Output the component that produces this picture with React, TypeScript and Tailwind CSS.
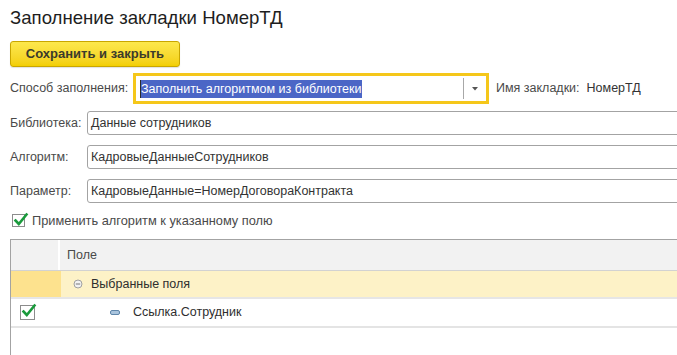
import React from 'react';

// Small form in the 1C style: fill settings for a bookmark
function CheckBox({ className = '' }: { className?: string }) {
  return (
    <span className={`relative inline-block w-[13px] h-[13px] border border-[#8c8c8c] bg-white ${className}`}>
      <svg className="absolute left-[0px] top-[-3px]" width="16" height="16" viewBox="0 0 16 16">
        <path d="M2.5 8.5 L5.8 12 L13.5 2.5" fill="none" stroke="#1a9a3c" strokeWidth="2.6" strokeLinecap="square" />
      </svg>
    </span>
  );
}

function Field({ label, value }: { label: string; value: string }) {
  return (
    <div className="flex items-center h-[24px]">
      <span className="w-[77px] shrink-0 text-[#4a4a4a]">{label}</span>
      <div className="flex-1 -mr-[6px] h-[24px] border border-[#a3a3a3] rounded-l-[3px] flex items-center pl-[3px] text-[#333]">
        {value}
      </div>
    </div>
  );
}

export default function App() {
  return (
    <div className="w-[677px] h-[355px] overflow-hidden bg-white font-['Liberation_Sans',Arial,sans-serif] text-[12.5px] text-[#333]">
      <div className="pl-[10px]">
        <h1 className="pt-[6px] h-[30px] text-[18.6px] leading-[24px] text-[#1e1e1e]">Заполнение закладки НомерТД</h1>

        <button className="mt-[11px] h-[26px] w-[170px] rounded-[3px] border border-[#c9a600] bg-gradient-to-b from-[#fde84c] to-[#f3cf00] font-bold text-[13px] text-[#3b3b2b] shadow-[0_1px_1px_rgba(0,0,0,0.12)]">
          Сохранить и закрыть
        </button>

        <div className="mt-[6px] flex items-center h-[31px]">
          <span className="w-[123px] shrink-0 text-[#4a4a4a]">Способ заполнения:</span>
          <div className="w-[356px] h-[31px] border-[3px] border-[#f5c71a] flex items-center pl-[4px]">
            <span className="h-[18px] leading-[18px] bg-[#4b66c6] text-white pr-[1px] border-l border-[#2b2b2b]">
              Заполнить алгоритмом из библиотеки
            </span>
            <div className="ml-auto h-[21px] w-px bg-[#a8a8a8]" />
            <div className="w-[22px] flex justify-center">
              <svg width="6" height="4" viewBox="0 0 6 4">
                <path d="M0 0 H6 L3 3.5 Z" fill="#555" />
              </svg>
            </div>
          </div>
          <span className="ml-[7px] text-[#4a4a4a]">Имя закладки:</span>
          <span className="ml-[7px] text-[#333]">НомерТД</span>
        </div>

        <div className="mt-[7px]">
          <Field label="Библиотека:" value="Данные сотрудников" />
        </div>
        <div className="mt-[10px]">
          <Field label="Алгоритм:" value="КадровыеДанныеСотрудников" />
        </div>
        <div className="mt-[10px]">
          <Field label="Параметр:" value="КадровыеДанные=НомерДоговораКонтракта" />
        </div>

        <div className="mt-[11px] flex items-center h-[13px]">
          <CheckBox className="ml-[2px]" />
          <span className="ml-[7px] text-[#4a4a4a] text-[12.8px]">Применить алгоритм к указанному полю</span>
        </div>
      </div>

      {/* Field tree */}
      <div className="ml-[10px] mt-[12px] border-l border-t border-[#a3a3a3] h-[200px]">
        <div className="flex h-[31px] bg-[#f2f2f2] border-b border-[#d2d2d2]">
          <div className="w-[49px] border-r-2 border-white" />
          <div className="flex items-center pl-[7px] text-[#4a4a4a]">Поле</div>
        </div>
        <div className="flex h-[28px] border-b-2 border-[#e6e6e6]">
          <div className="w-[50px] bg-[#fde28e]" />
          <div className="flex-1 bg-[#fdf2c7] flex items-center pl-[12px]">
            <svg width="10" height="10" viewBox="0 0 10 10">
              <circle cx="5" cy="5" r="4" fill="#f2f2f2" stroke="#a0a0a0" strokeWidth="1" />
              <path d="M2.8 5 H7.2" stroke="#777" strokeWidth="1" />
            </svg>
            <span className="ml-[8px] text-[#2e2e2e]">Выбранные поля</span>
          </div>
        </div>
        <div className="flex h-[29px] border-b-2 border-[#e4e4e4] items-center">
          <div className="w-[50px] flex items-center pl-[9px]">
            <CheckBox className="w-[15px] h-[15px]" />
          </div>
          <div className="flex items-center pl-[49px]">
            <span className="block w-[10px] h-[5px] rounded-[2px] border border-[#5f86aa] bg-[#a9c4dd]" />
            <span className="ml-[13px] text-[#2e2e2e]">Ссылка.Сотрудник</span>
          </div>
        </div>
      </div>
    </div>
  );
}
